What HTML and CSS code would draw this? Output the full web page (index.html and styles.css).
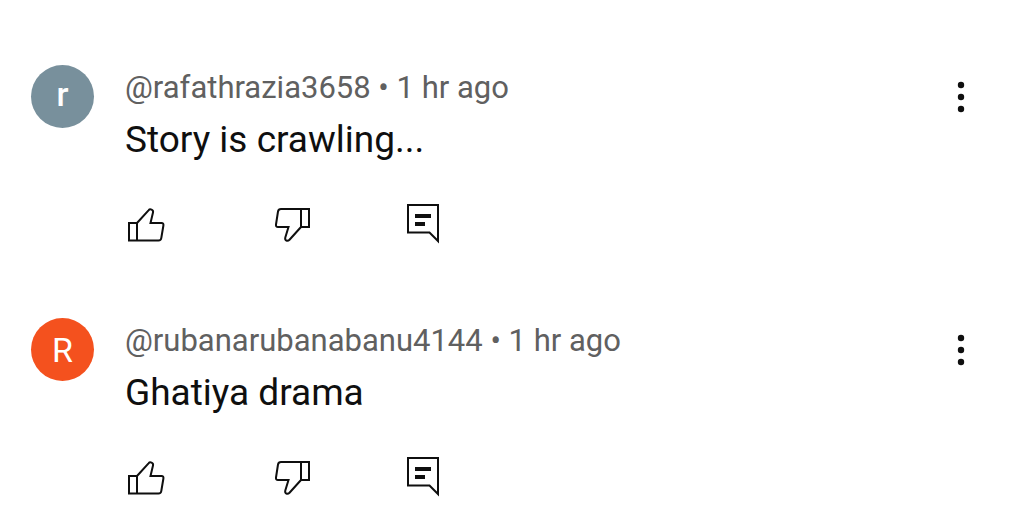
FILE: index.html
```html
<!DOCTYPE html>
<html lang="en">
<head>
<meta charset="utf-8">
<title>Comments</title>
<link rel="stylesheet" href="styles.css">
</head>
<body>
<svg class="symbols" aria-hidden="true">
<symbol id="like" viewBox="0 0 40 40"><path d="M4 19h8v17.500H4zM12 19L23.500 6.300C25 4.500 28.700 5.500 28 8.500L25.500 19H36.500Q38.800 19 38.400 21.500L36.300 34Q36 36.500 33.500 36.500H12"/></symbol>
<symbol id="dislike" viewBox="0 0 40 40"><path d="M30 5h8v18h-8zM30 5H10Q7.500 5 7 7.500L5 20.500Q4.700 23 7 23H17.500L14.300 33.500C13.500 36.700 16.500 37.700 18.500 35.700L30 23"/></symbol>
<symbol id="reply" viewBox="0 0 40 40"><path d="M5 1h30v36l-8.500-8.500H5z"/><path class="bar" d="M12 12h16M12 20h10"/></symbol>
</svg>
<main class="comments">
<article class="comment">
<div class="avatar grey">r</div>
<div class="body">
<div class="meta">@rafathrazia3658 • 1 hr ago</div>
<p class="text">Story is crawling...</p>
<div class="actions">
<button aria-label="Like"><svg><use href="#like"/></svg></button>
<button aria-label="Dislike"><svg><use href="#dislike"/></svg></button>
<button class="reply" aria-label="Reply"><svg><use href="#reply"/></svg></button>
</div>
</div>
<button class="more" aria-label="More options"><svg viewBox="0 0 40 40"><circle cx="20" cy="8" r="3.200"/><circle cx="20" cy="20" r="3.200"/><circle cx="20" cy="32" r="3.200"/></svg></button>
</article>
<article class="comment">
<div class="avatar orange">R</div>
<div class="body">
<div class="meta">@rubanarubanabanu4144 • 1 hr ago</div>
<p class="text">Ghatiya drama</p>
<div class="actions">
<button aria-label="Like"><svg><use href="#like"/></svg></button>
<button aria-label="Dislike"><svg><use href="#dislike"/></svg></button>
<button class="reply" aria-label="Reply"><svg><use href="#reply"/></svg></button>
</div>
</div>
<button class="more" aria-label="More options"><svg viewBox="0 0 40 40"><circle cx="20" cy="8" r="3.200"/><circle cx="20" cy="20" r="3.200"/><circle cx="20" cy="32" r="3.200"/></svg></button>
</article>
</main>
</body>
</html>
```

FILE: styles.css
```css
* {
box-sizing: border-box;
}
body {
margin: 0;
background: #fff;
color: #0f0f0f;
font-family: Roboto, sans-serif;
}
.symbols {
display: none;
}
.comments {
display: grid;
gap: 74px;
padding: 65px 43px 20px 31px;
}
.comment {
display: flex;
align-items: flex-start;
}
.avatar {
display: grid;
place-items: center;
width: 63px;
height: 63px;
margin-right: 31px;
border-radius: 50%;
color: #fff;
font-size: 34px;
}
.grey {
padding-bottom: 5px;
background: #78909c;
font-weight: 500;
}
.orange {
background: #f4511e;
}
.body {
flex: 1;
}
.meta {
color: #606060;
font-size: 31px;
line-height: 46px;
}
.text {
margin: 0;
font-size: 37px;
line-height: 58px;
}
.actions {
display: flex;
gap: 106px;
padding-top: 35px;
}
button {
display: block;
padding: 0;
border: 0;
background: none;
color: inherit;
cursor: pointer;
}
button svg {
display: block;
width: 40px;
height: 40px;
fill: none;
stroke: currentColor;
stroke-width: 2;
}
.bar {
stroke-width: 4;
}
.reply {
margin-left: -14px;
}
.more {
padding-top: 12px;
}
.more svg {
fill: currentColor;
stroke: none;
}
```
